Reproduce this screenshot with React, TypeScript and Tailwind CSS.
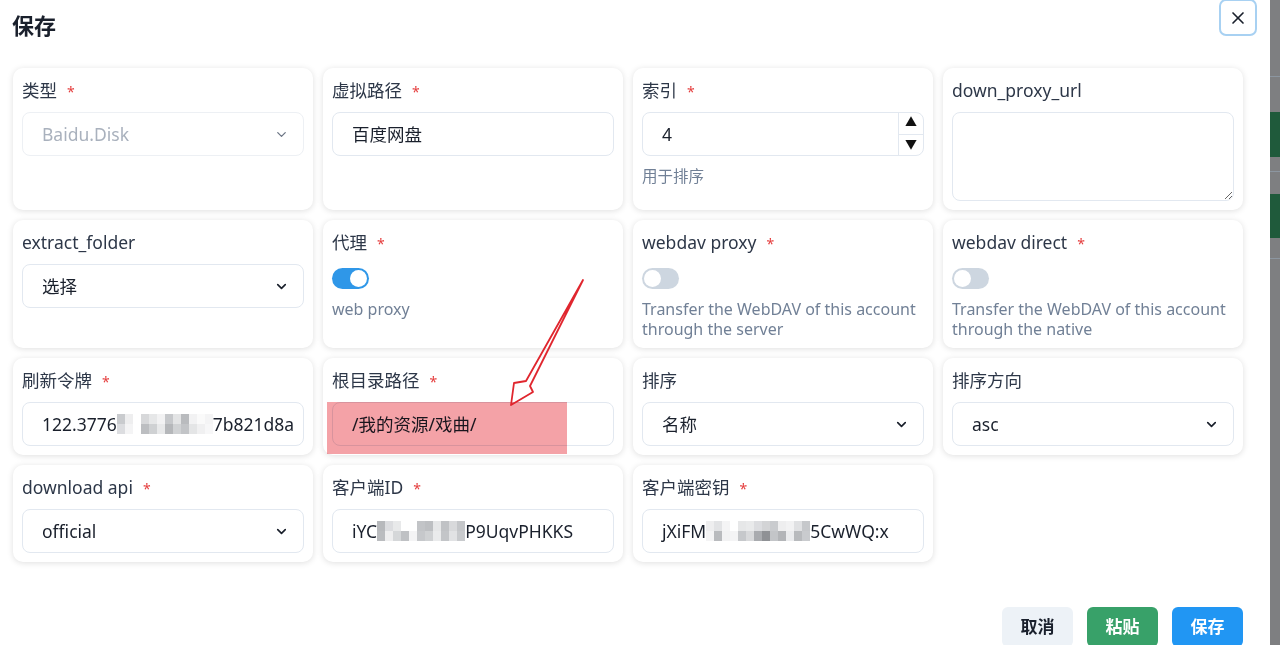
import { ChevronDown, X } from "lucide-react";

const font = "font-['Noto_Sans','Noto_Sans_CJK_SC',sans-serif]";

function Label({ text, required }: { text: string; required?: boolean }) {
    return (
        <div className="h-[24px] leading-[24px] text-[17.5px] text-[#2d3748] whitespace-nowrap">
            {text}
            {required && <span className="ml-[10px] text-[14px] text-[#e53e3e]">*</span>}
        </div>
    );
}

function Card({ children }: { children: React.ReactNode }) {
    return (
        <div className="bg-white rounded-[10px] shadow-[0_1px_6px_rgba(0,0,0,0.13)] px-[9px] pt-[10px] pb-[9px] flex flex-col">
            {children}
        </div>
    );
}

function Field({ children, disabled }: { children: React.ReactNode; disabled?: boolean }) {
    return (
        <div
            className={
                "mt-[10px] h-[44px] rounded-[8px] border flex items-center pl-[19px] pr-[14px] text-[17.5px] overflow-hidden whitespace-nowrap " +
                (disabled ? "border-[#edf0f4] text-[#a9b1bd]" : "border-[#e2e8f0] text-[#1a202c]")
            }
        >
            {children}
        </div>
    );
}

function SelectBox({ value, disabled }: { value: string; disabled?: boolean }) {
    return (
        <Field disabled={disabled}>
            <span className="flex-1">{value}</span>
            <ChevronDown size={15} strokeWidth={disabled ? 2 : 2.6} className={disabled ? "text-[#6b7584]" : "text-[#1a202c]"} />
        </Field>
    );
}

function Mosaic({ top, bottom }: { top: string[]; bottom: string[] }) {
    return (
        <span className="inline-flex flex-col h-[20px]">
            <span className="flex flex-1">
                {top.map((c, i) => (
                    <span key={i} className={"w-[8px] " + c} />
                ))}
            </span>
            <span className="flex flex-1">
                {bottom.map((c, i) => (
                    <span key={i} className={"w-[8px] " + c} />
                ))}
            </span>
        </span>
    );
}

function Toggle({ on }: { on?: boolean }) {
    return (
        <div
            className={
                "mt-[14px] w-[37px] h-[21px] rounded-full flex items-center px-[2px] " +
                (on ? "bg-[#2f97e8] justify-end" : "bg-[#cdd6e0] justify-start")
            }
        >
            <div className="w-[17px] h-[17px] rounded-full bg-white" />
        </div>
    );
}

function Hint({ children }: { children: React.ReactNode }) {
    return <div className="mt-[10px] text-[16px] leading-[20px] text-[#718096]">{children}</div>;
}

export default function App() {
    return (
        <div className={"w-[1280px] h-[645px] flex overflow-hidden bg-white " + font}>
            <div className="relative w-[1270px] h-full bg-white">
                <div className="h-[68px] flex justify-between items-start pl-[12px] pr-[13px]">
                    <h1 className="mt-[10px] text-[22px] leading-[30px] font-bold text-[#1a202c]">保存</h1>
                    <button className="-mt-[1px] w-[38px] h-[37px] rounded-[7px] border-2 border-[#a8d1f2] flex items-center justify-center text-[#1a202c]">
                        <X size={20} strokeWidth={2} />
                    </button>
                </div>

                <div className="ml-[13px] w-[1230px] grid grid-cols-4 gap-[10px]">
                    <Card>
                        <Label text="类型" required />
                        <SelectBox value="Baidu.Disk" disabled />
                    </Card>
                    <Card>
                        <Label text="虚拟路径" required />
                        <Field>百度网盘</Field>
                    </Card>
                    <Card>
                        <Label text="索引" required />
                        <div className="mt-[10px] h-[44px] rounded-[8px] border border-[#e2e8f0] flex items-stretch text-[17.5px] text-[#1a202c]">
                            <div className="flex-1 flex items-center pl-[19px]">4</div>
                            <div className="w-[25px] border-l border-[#e2e8f0] flex flex-col text-[12px] text-[#111]">
                                <div className="flex-1 flex items-center justify-center border-b border-[#e2e8f0]">▲</div>
                                <div className="flex-1 flex items-center justify-center">▼</div>
                            </div>
                        </div>
                        <div className="mt-[10px] text-[15.5px] leading-[20px] text-[#718096]">用于排序</div>
                    </Card>
                    <Card>
                        <Label text="down_proxy_url" />
                        <textarea className="mt-[10px] h-[89px] rounded-[8px] border border-[#e2e8f0] outline-none resize-y" />
                    </Card>

                    <Card>
                        <Label text="extract_folder" />
                        <SelectBox value="选择" />
                    </Card>
                    <Card>
                        <Label text="代理" required />
                        <Toggle on />
                        <Hint>web proxy</Hint>
                    </Card>
                    <Card>
                        <Label text="webdav proxy" required />
                        <Toggle />
                        <Hint>
                            Transfer the WebDAV of this account
                            <br />
                            through the server
                        </Hint>
                    </Card>
                    <Card>
                        <Label text="webdav direct" required />
                        <Toggle />
                        <Hint>
                            Transfer the WebDAV of this account
                            <br />
                            through the native
                        </Hint>
                    </Card>

                    <Card>
                        <Label text="刷新令牌" required />
                        <Field>
                            122.3776
                            <Mosaic
                                top={[
                                    "bg-[#c9cbce]", "bg-[#eeeeef]", "bg-[#ffffff]", "bg-[#d7d8da]", "bg-[#e6e7e8]",
                                    "bg-[#f2f2f3]", "bg-[#c6c8cb]", "bg-[#e3e4e5]", "bg-[#b9bbbe]", "bg-[#f2f2f3]",
                                    "bg-[#fafafa]", "bg-[#f4f4f5]",
                                ]}
                                bottom={[
                                    "bg-[#dcdde0]", "bg-[#f4f4f5]", "bg-[#ffffff]", "bg-[#bcbec1]", "bg-[#cfd1d3]",
                                    "bg-[#e8e9ea]", "bg-[#b5b7ba]", "bg-[#d0d2d4]", "bg-[#c2c4c7]", "bg-[#e4e5e6]",
                                    "bg-[#f0f0f1]", "bg-[#f7f7f8]",
                                ]}
                            />
                            7b821d8a
                        </Field>
                    </Card>
                    <Card>
                        <Label text="根目录路径" required />
                        <Field>/我的资源/戏曲/</Field>
                    </Card>
                    <Card>
                        <Label text="排序" />
                        <SelectBox value="名称" />
                    </Card>
                    <Card>
                        <Label text="排序方向" />
                        <SelectBox value="asc" />
                    </Card>

                    <Card>
                        <Label text="download api" required />
                        <SelectBox value="official" />
                    </Card>
                    <Card>
                        <Label text="客户端ID" required />
                        <Field>
                            iYC
                            <Mosaic
                                top={[
                                    "bg-[#b7b9bc]", "bg-[#dcdde0]", "bg-[#e8e9ea]", "bg-[#ffffff]", "bg-[#ffffff]",
                                    "bg-[#c2c4c7]", "bg-[#bdbfc2]", "bg-[#e6e7e8]", "bg-[#c0c2c5]", "bg-[#d8d9db]",
                                    "bg-[#c4c6c9]",
                                ]}
                                bottom={[
                                    "bg-[#babcbf]", "bg-[#eeeeef]", "bg-[#d5d7d9]", "bg-[#bfc1c4]", "bg-[#f4f4f5]",
                                    "bg-[#c6c8cb]", "bg-[#cfd1d3]", "bg-[#eaebec]", "bg-[#c3c5c8]", "bg-[#e1e2e4]",
                                    "bg-[#c8cacd]",
                                ]}
                            />
                            P9UqvPHKKS
                        </Field>
                    </Card>
                    <Card>
                        <Label text="客户端密钥" required />
                        <Field>
                            jXiFM
                            <Mosaic
                                top={[
                                    "bg-[#eeeeef]", "bg-[#e2e3e5]", "bg-[#f4f4f5]", "bg-[#ffffff]", "bg-[#e6e7e8]",
                                    "bg-[#e9eaeb]", "bg-[#dcdde0]", "bg-[#d3d4d6]", "bg-[#c9cbce]", "bg-[#eeeeef]",
                                    "bg-[#f2f2f3]", "bg-[#e0e1e3]", "bg-[#c6c8cb]",
                                ]}
                                bottom={[
                                    "bg-[#f4f4f5]", "bg-[#b9bbbe]", "bg-[#f2f2f3]", "bg-[#f4f4f5]", "bg-[#c6c8cb]",
                                    "bg-[#d8d9db]", "bg-[#a9abaf]", "bg-[#8f9195]", "bg-[#c3c5c8]", "bg-[#b3b5b8]",
                                    "bg-[#ebecee]", "bg-[#b8babd]", "bg-[#c9cbce]",
                                ]}
                            />
                            5CwWQ:x
                        </Field>
                    </Card>
                </div>

                <div className="mt-[45px] pr-[27px] flex justify-end gap-[14px]">
                    <button className="w-[71px] h-[40px] rounded-[6px] bg-[#edf2f7] text-[17px] font-bold text-[#1a202c]">取消</button>
                    <button className="w-[71px] h-[40px] rounded-[6px] bg-[#38a169] text-[17px] font-bold text-white">粘贴</button>
                    <button className="w-[71px] h-[40px] rounded-[6px] bg-[#2196f3] text-[17px] font-bold text-white">保存</button>
                </div>

                {/* annotation: highlight + arrow */}
                <div className="absolute left-[327px] top-[402px] w-[240px] h-[52px] bg-[#f4a2a7] mix-blend-multiply" />
                <svg className="absolute left-0 top-0 pointer-events-none" width="1270" height="645">
                    <path
                        d="M583 280 L526 381 L514 383 L511 405 L533 392 L530 386 Z"
                        fill="none"
                        stroke="#e0262e"
                        strokeWidth="1.8"
                        strokeLinejoin="round"
                    />
                </svg>
            </div>

            <div className="w-[10px] h-full bg-[#7e7f81] flex flex-col">
                <div className="h-[76px]" />
                <div className="h-[1px] bg-[#8c96a0]" />
                <div className="h-[35px]" />
                <div className="h-[45px] bg-[#1f5a3b]" />
                <div className="h-[14px]" />
                <div className="h-[1px] bg-[#8c96a0]" />
                <div className="h-[22px]" />
                <div className="h-[44px] bg-[#1f5a3b]" />
                <div className="h-[20px]" />
                <div className="h-[1px] bg-[#8c96a0]" />
            </div>
        </div>
    );
}
